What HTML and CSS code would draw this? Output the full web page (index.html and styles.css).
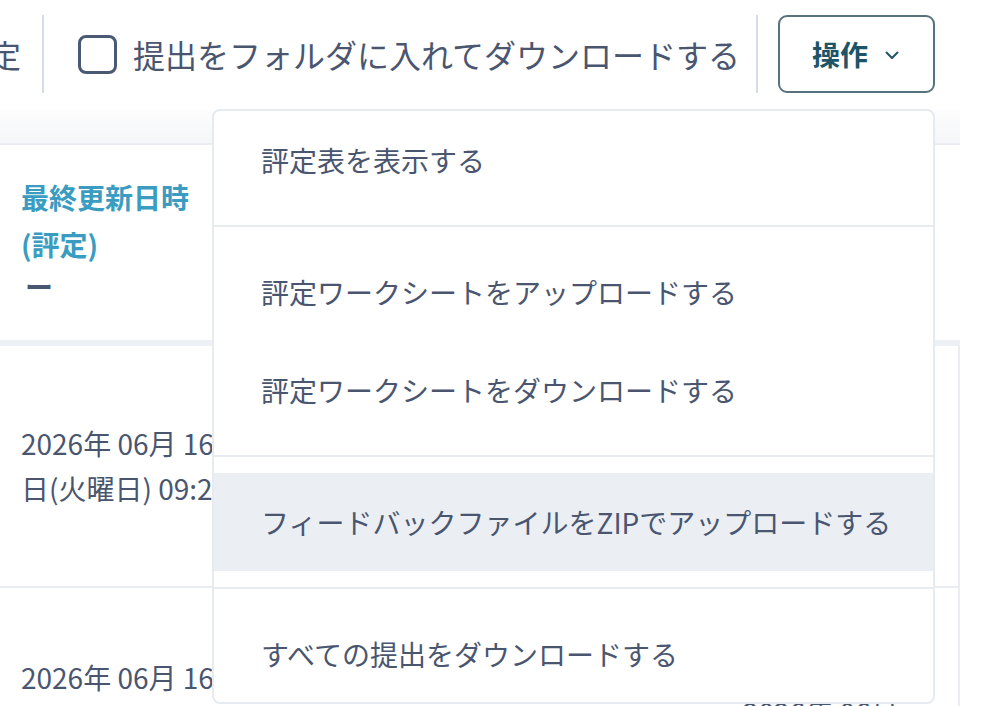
FILE: index.html
```html
<!DOCTYPE html>
<html lang="ja">
<head>
<meta charset="utf-8">
<title>提出</title>
<link rel="stylesheet" href="styles.css">
</head>
<body>
<div class="toolbar">
  <span class="cut-label">評定</span>
  <span class="sep sep-a"></span>
  <label class="check"><span class="box"></span><span>提出をフォルダに入れてダウンロードする</span></label>
  <span class="sep sep-b"></span>
  <div class="actions">
    <button class="btn" type="button">操作
      <svg class="chev" width="14" height="9" viewBox="0 0 14 9"><polyline points="1.5,1.5 7,7 12.5,1.5" fill="none" stroke="#1d5467" stroke-width="2" stroke-linecap="round" stroke-linejoin="round"/></svg>
    </button>
    <div class="menu">
      <div class="item">評定表を表示する</div>
      <div class="divider"></div>
      <div class="item">評定ワークシートをアップロードする</div>
      <div class="item">評定ワークシートをダウンロードする</div>
      <div class="divider"></div>
      <div class="item active">フィードバックファイルをZIPでアップロードする</div>
      <div class="divider"></div>
      <div class="item last">すべての提出をダウンロードする</div>
    </div>
  </div>
</div>

<div class="table">
  <div class="thead-band"></div>
  <div class="thead">
    <div class="th-title">最終更新日時<br>(評定)</div>
    <div class="dash">ー</div>
  </div>
  <div class="band"></div>
  <div class="tbody">
    <div class="row r1">
      <div class="cell c1">2026年 06月 16<br>日(火曜日) 09:25</div>
    </div>
    <div class="row r2">
      <div class="cell c1">2026年 06月 16</div>
      <div class="cell c2"></div>
      <div class="cell c3">2026年 06月</div>
    </div>
  </div>
</div>
</body>
</html>
```

FILE: styles.css
```css
html, body {
  margin: 0;
  padding: 0;
}

body {
  width: 1002px;
  height: 706px;
  overflow: hidden;
  background: #ffffff;
  color: #4a5670;
  font-family: "Noto Sans CJK JP", "Noto Sans", sans-serif;
}

.toolbar {
  display: flex;
  align-items: center;
  height: 78px;
  margin-top: 15px;
}

.cut-label {
  font-size: 32px;
  line-height: 1;
  margin-left: -43px;
  white-space: nowrap;
}

.sep {
  width: 2px;
  align-self: stretch;
  background: #d6dce4;
  flex: none;
}

.sep-a {
  margin-left: 21px;
}

.check {
  display: flex;
  align-items: center;
  gap: 16px;
  margin-left: 34px;
  font-size: 32px;
  line-height: 1;
  white-space: nowrap;
  flex: none;
}

.box {
  width: 39px;
  height: 39px;
  box-sizing: border-box;
  border: 3px solid #4b5a74;
  border-radius: 8px;
  flex: none;
}

.sep-b {
  margin-left: 16px;
}

.actions {
  position: relative;
  margin-left: 20px;
  align-self: stretch;
  flex: none;
}

.btn {
  display: flex;
  align-items: center;
  gap: 17px;
  width: 157px;
  height: 78px;
  box-sizing: border-box;
  padding: 0 0 0 32px;
  border: 2px solid #56737f;
  border-radius: 9px;
  background: #ffffff;
  color: #1d5467;
  font-family: "Noto Sans CJK JP", "Noto Sans", sans-serif;
  font-weight: bold;
  font-size: 28px;
  line-height: 1;
}

.chev {
  display: block;
  margin-top: 2px;
}

.menu {
  position: absolute;
  right: 0;
  top: 94px;
  width: 723px;
  box-sizing: border-box;
  border: 2px solid #e6ebf0;
  border-radius: 8px;
  background: #ffffff;
  z-index: 10;
  overflow: hidden;
}

.item {
  display: flex;
  align-items: center;
  height: 98px;
  padding-left: 47px;
  font-size: 28px;
  color: #4a5670;
  white-space: nowrap;
}

.item.last {
  height: 97px;
}

.item.active {
  background: #ebeff4;
}

.divider {
  height: 2px;
  margin: 16px 0;
  background: #e8ecf1;
}

.table {
  width: 960px;
  margin-top: 17px;
}

.thead-band {
  height: 33px;
  background: linear-gradient(#fdfdfe, #f5f6f8);
  border-bottom: 2px solid #e9edf1;
}

.thead {
  height: 195px;
  box-sizing: border-box;
  padding: 29px 0 0 21px;
}

.th-title {
  font-weight: bold;
  font-size: 28px;
  line-height: 47px;
  color: #3a9cc1;
}

.dash {
  font-size: 28px;
  line-height: 36px;
  font-weight: bold;
  padding-left: 4px;
  color: #4a5670;
}

.band {
  height: 6px;
  background: #edf1f5;
}

.tbody {
  border-right: 2px solid #e9edf1;
}

.row {
  display: flex;
  border-bottom: 2px solid #e9edf1;
}

.r1 {
  height: 240px;
  align-items: center;
}

.r2 {
  align-items: flex-start;
  height: 240px;
}

.cell {
  box-sizing: border-box;
  padding-left: 21px;
  font-size: 28px;
  line-height: 45px;
  white-space: nowrap;
}

.c1 {
  width: 276px;
}

.r2 .c1 {
  padding-top: 67px;
}

.c2 {
  width: 446px;
}

.c3 {
  padding-top: 102px;
}
```
